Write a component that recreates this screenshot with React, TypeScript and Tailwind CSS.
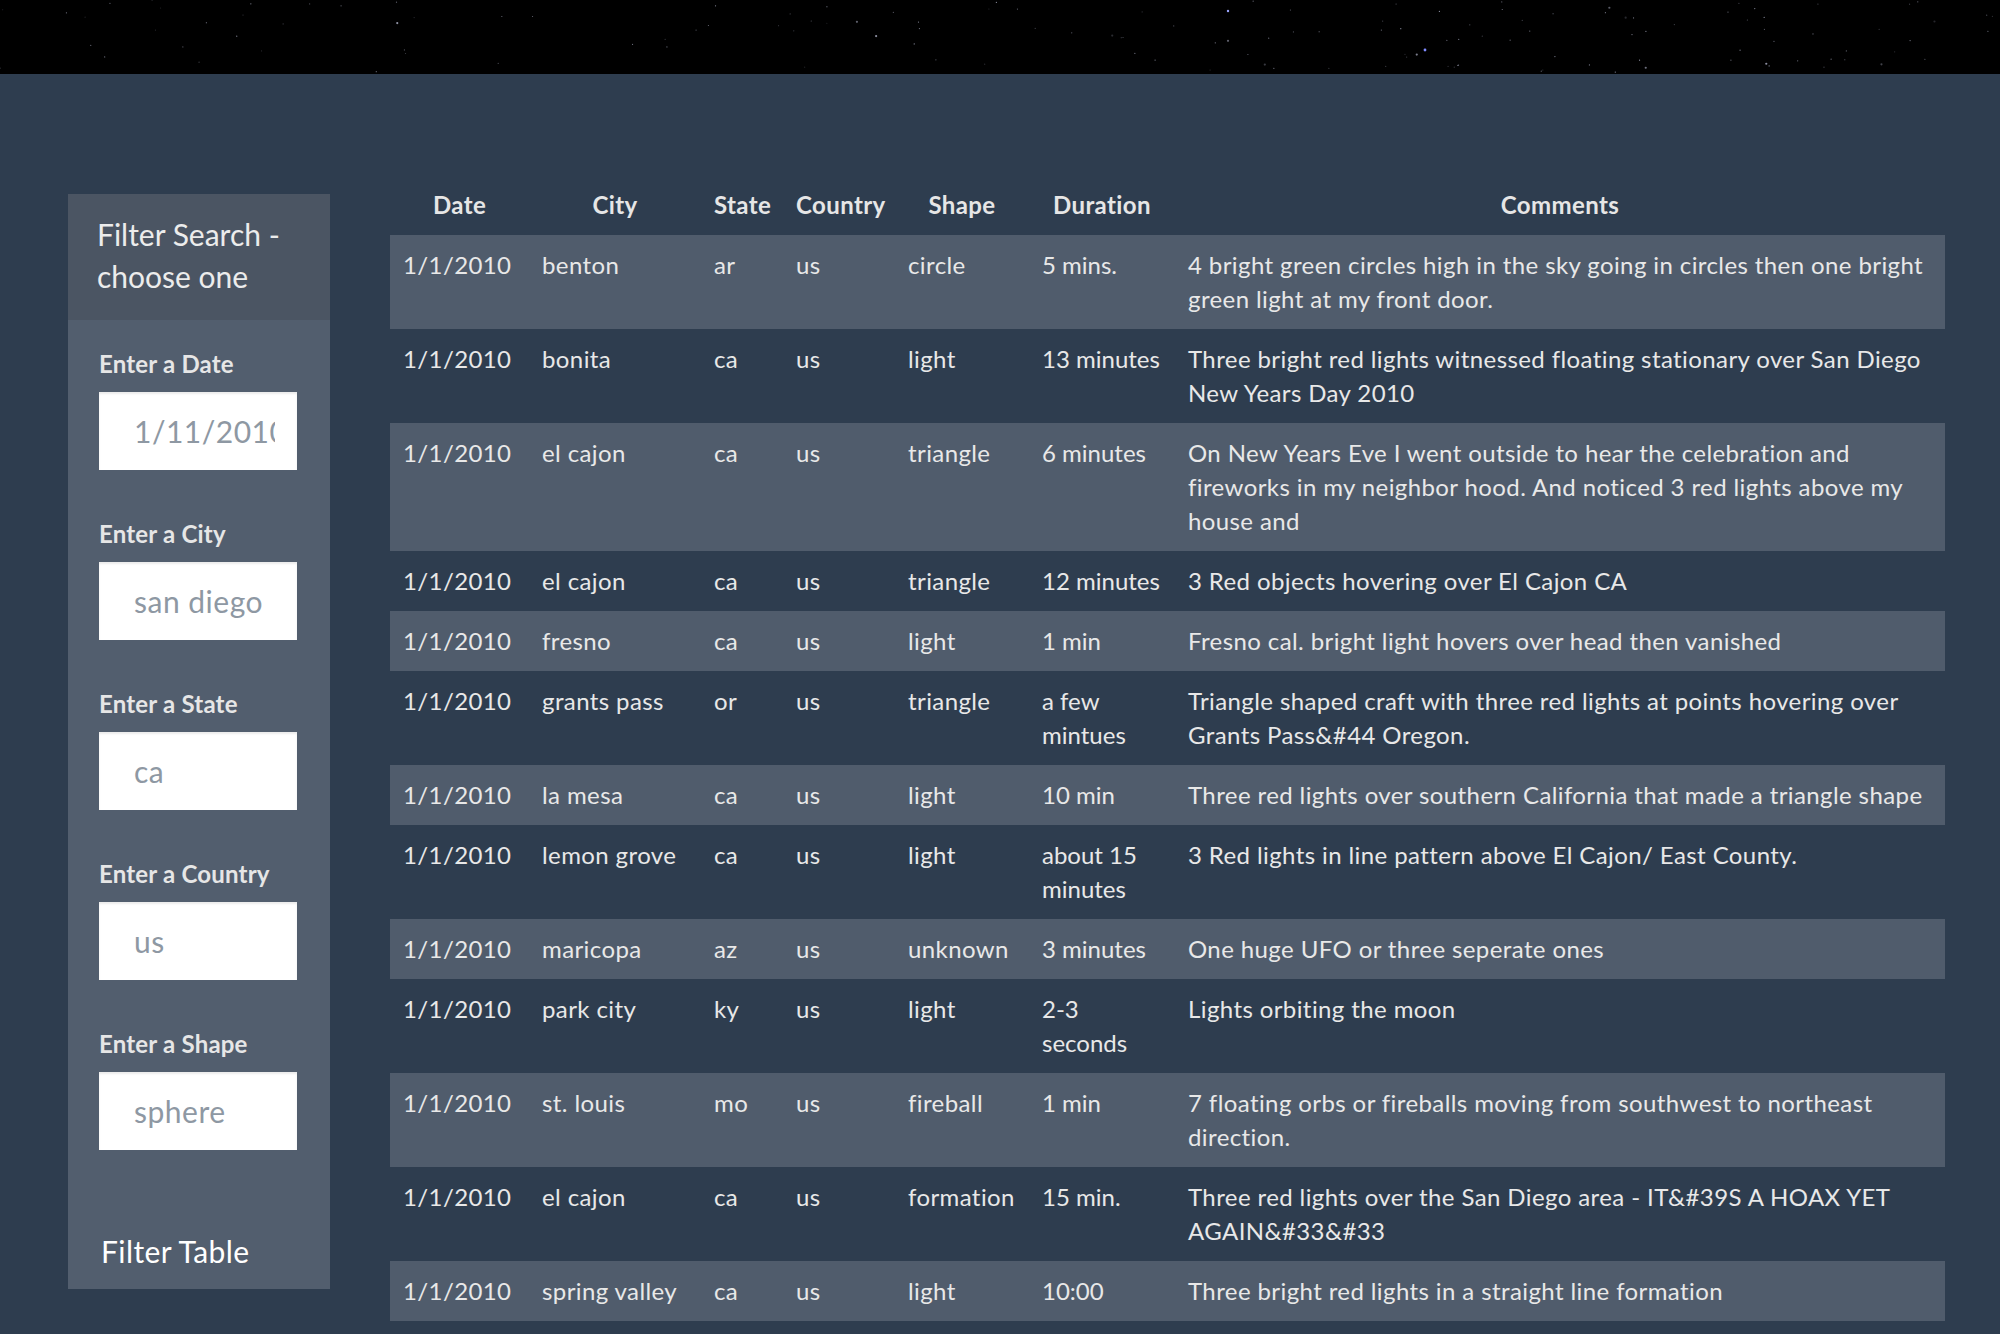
import React from "react";

type Sighting = {
  date: string;
  city: string;
  state: string;
  country: string;
  shape: string;
  duration: string;
  comments: string;
};

const sightings: Sighting[] = [
  { date: "1/1/2010", city: "benton", state: "ar", country: "us", shape: "circle", duration: "5 mins.", comments: "4 bright green circles high in the sky going in circles then one bright green light at my front door." },
  { date: "1/1/2010", city: "bonita", state: "ca", country: "us", shape: "light", duration: "13 minutes", comments: "Three bright red lights witnessed floating stationary over San Diego New Years Day 2010" },
  { date: "1/1/2010", city: "el cajon", state: "ca", country: "us", shape: "triangle", duration: "6 minutes", comments: "On New Years Eve I went outside to hear the celebration and fireworks in my neighbor hood. And noticed 3 red lights above my house and" },
  { date: "1/1/2010", city: "el cajon", state: "ca", country: "us", shape: "triangle", duration: "12 minutes", comments: "3 Red objects hovering over El Cajon CA" },
  { date: "1/1/2010", city: "fresno", state: "ca", country: "us", shape: "light", duration: "1 min", comments: "Fresno cal. bright light hovers over head then vanished" },
  { date: "1/1/2010", city: "grants pass", state: "or", country: "us", shape: "triangle", duration: "a few mintues", comments: "Triangle shaped craft with three red lights at points hovering over Grants Pass&#44 Oregon." },
  { date: "1/1/2010", city: "la mesa", state: "ca", country: "us", shape: "light", duration: "10 min", comments: "Three red lights over southern California that made a triangle shape" },
  { date: "1/1/2010", city: "lemon grove", state: "ca", country: "us", shape: "light", duration: "about 15 minutes", comments: "3 Red lights in line pattern above El Cajon/ East County." },
  { date: "1/1/2010", city: "maricopa", state: "az", country: "us", shape: "unknown", duration: "3 minutes", comments: "One huge UFO or three seperate ones" },
  { date: "1/1/2010", city: "park city", state: "ky", country: "us", shape: "light", duration: "2-3 seconds", comments: "Lights orbiting the moon" },
  { date: "1/1/2010", city: "st. louis", state: "mo", country: "us", shape: "fireball", duration: "1 min", comments: "7 floating orbs or fireballs moving from southwest to northeast direction." },
  { date: "1/1/2010", city: "el cajon", state: "ca", country: "us", shape: "formation", duration: "15 min.", comments: "Three red lights over the San Diego area - IT&#39S A HOAX YET AGAIN&#33&#33" },
  { date: "1/1/2010", city: "spring valley", state: "ca", country: "us", shape: "light", duration: "10:00", comments: "Three bright red lights in a straight line formation" },
];

const filters = [
  { label: "Enter a Date", placeholder: "1/11/2010" },
  { label: "Enter a City", placeholder: "san diego" },
  { label: "Enter a State", placeholder: "ca" },
  { label: "Enter a Country", placeholder: "us" },
  { label: "Enter a Shape", placeholder: "sphere" },
];

const headers = ["Date", "City", "State", "Country", "Shape", "Duration", "Comments"];
const colWidths = ["w-[139px]", "w-[172px]", "w-[82px]", "w-[112px]", "w-[134px]", "w-[146px]", "w-[770px]"];

// starfield in the top banner
function Stars() {
  let seed = 7;
  const rand = () => {
    seed = (seed * 16807) % 2147483647;
    return seed / 2147483647;
  };
  const dots = Array.from({ length: 140 }, () => ({
    x: rand() * 2000,
    y: rand() * 74,
    r: rand() < 0.9 ? 0.6 : 1.1,
    o: 0.15 + rand() * 0.5,
  }));
  return (
    <svg width="2000" height="74" viewBox="0 0 2000 74" className="block">
      {dots.map((d, i) => (
        <circle key={i} cx={d.x} cy={d.y} r={d.r} fill="#dfe3ff" opacity={d.o} />
      ))}
      <circle cx="1425" cy="50" r="1.4" fill="#7f8bff" />
      <circle cx="1228" cy="11" r="1.2" fill="#9aa4ff" />
    </svg>
  );
}

export default function App() {
  return (
    <div className="min-h-screen bg-[#2e3d4f] font-[Lato,sans-serif] text-[#e8e8e8]">
      <header className="h-[74px] overflow-hidden bg-black">
        <Stars />
      </header>

      <main className="flex items-start gap-[60px] pl-[68px] pr-[55px] pt-[97px]">
        <aside className="mt-[23px] w-[262px] shrink-0 bg-[#525e6e]">
          <div className="bg-[#4b5563] px-[29px] pb-[23px] pt-[19px] text-[30px] leading-[42px] text-[#ececec]">
            Filter Search - choose one
          </div>
          <form className="pb-[17px] pl-[31px] pt-[27px]">
            {filters.map((f) => (
              <div key={f.label} className="mb-[47px]">
                <label className="block text-[24px] font-bold leading-[34px] tracking-[0.2px] text-[#e6e6e6]">{f.label}</label>
                <input
                  type="text"
                  placeholder={f.placeholder}
                  className="mt-[11px] block h-[78px] w-[198px] bg-white pl-[35px] pr-[22px] text-[30px] tracking-[0.5px] text-[#555] shadow-[inset_0_2px_2px_rgba(0,0,0,0.08)] outline-none placeholder:text-[#8e98a3]"
                />
              </div>
            ))}
            <button type="button" className="mt-[33px] pl-[2px] text-[30px] leading-[42px] tracking-[0.4px] text-white">
              Filter Table
            </button>
          </form>
        </aside>

        <table className="w-[1555px] table-fixed border-collapse text-[24px] leading-[34px] tracking-[0.4px]">
          <colgroup>
            {colWidths.map((w, i) => (
              <col key={i} className={w} />
            ))}
          </colgroup>
          <thead>
            <tr>
              {headers.map((h) => (
                <th key={h} className="px-[13px] pb-[13px] pt-[17px] text-center font-bold text-[#e6e6e6]">
                  {h}
                </th>
              ))}
            </tr>
          </thead>
          <tbody>
            {sightings.map((s, i) => (
              <tr key={i} className={i % 2 === 0 ? "bg-[#505c6c]" : ""}>
                <td className="p-[13px] align-top">{s.date}</td>
                <td className="p-[13px] align-top">{s.city}</td>
                <td className="p-[13px] align-top">{s.state}</td>
                <td className="p-[13px] align-top">{s.country}</td>
                <td className="whitespace-nowrap p-[13px] align-top">{s.shape}</td>
                <td className="p-[13px] align-top tracking-normal">{s.duration}</td>
                <td className="p-[13px] align-top">{s.comments}</td>
              </tr>
            ))}
          </tbody>
        </table>
      </main>
    </div>
  );
}
